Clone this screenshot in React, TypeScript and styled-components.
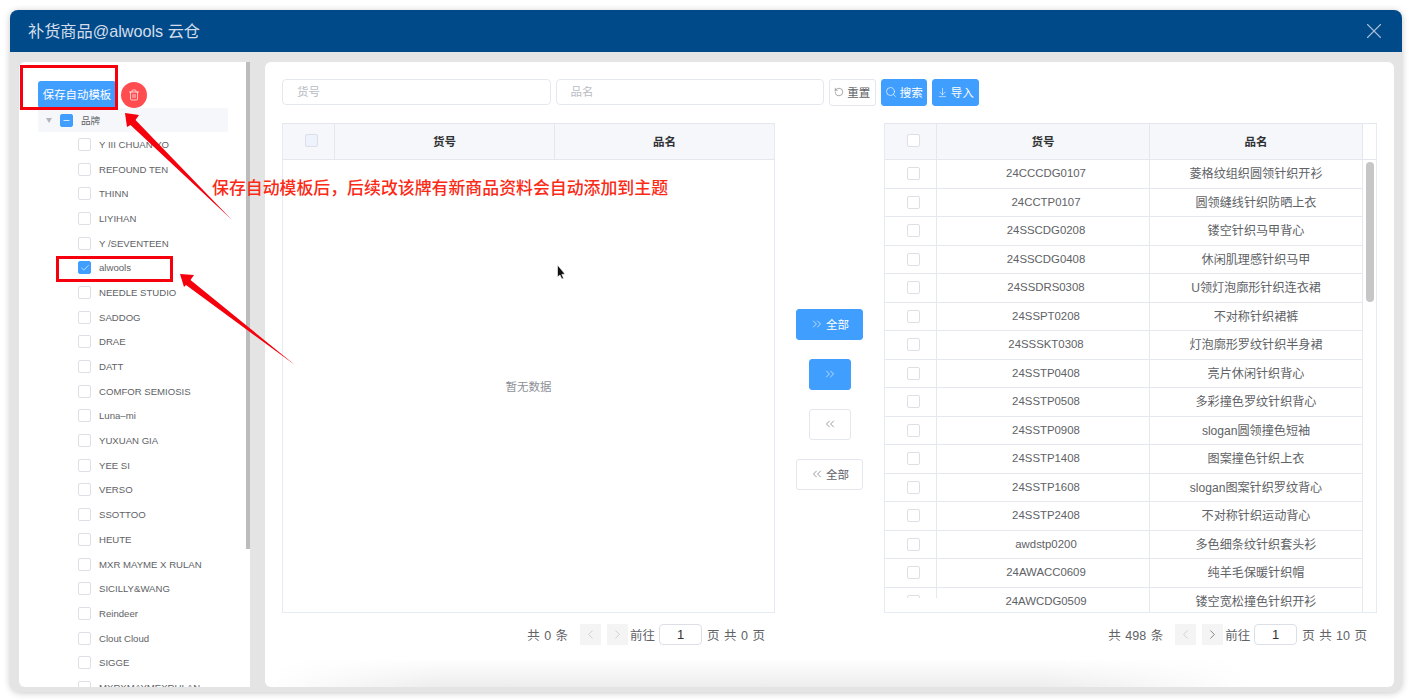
import React from "react";
import styled, { createGlobalStyle } from "styled-components";
import {
  ArrowDownToLine,
  Check,
  ChevronLeft,
  ChevronRight,
  ChevronsLeft,
  ChevronsRight,
  Minus,
  RotateCcw,
  Search,
  Trash2,
  X,
} from "lucide-react";

const GlobalStyle = createGlobalStyle`
  html, body {
    margin: 0;
    padding: 0;
    height: 700px;
    background: #fff;
    overflow: hidden;
    font-family: "Liberation Sans", "Noto Sans CJK SC", sans-serif;
  }
  * { box-sizing: border-box; }
`;

const Page = styled.div`
  position: relative;
  width: 1412px;
  height: 700px;
  padding: 10px 10px 8px;
`;

const Dialog = styled.div`
  display: flex;
  flex-direction: column;
  height: 682px;
  background: #e4e4e4;
  border-radius: 8px 8px 10px 10px;
  box-shadow: 0 1px 7px rgba(0, 0, 0, 0.22);
  overflow: hidden;
`;

const Header = styled.header`
  display: flex;
  align-items: center;
  justify-content: space-between;
  flex: none;
  height: 42px;
  padding: 0 15px 2px 18px;
  background: #004a8a;
  color: #d3deea;
  font-size: 16.2px;
`;

const CloseButton = styled.span`
  display: flex;
  margin-top: 2px;
  color: #a9bfd6;
`;

const Content = styled.div`
  display: flex;
  flex: 1;
  min-height: 0;
  padding: 10px 8px 5px 9px;
`;

const SidePanel = styled.aside`
  position: relative;
  flex: none;
  width: 231px;
  padding: 19px 0 0 19px;
  background: #fff;
  border-radius: 6px 0 0 6px;
  overflow: hidden;
`;

const SideScrollThumb = styled.div`
  position: absolute;
  top: 0;
  right: 0;
  width: 4px;
  height: 487px;
  background: #bcbcbc;
`;

const SideActions = styled.div`
  display: flex;
  align-items: center;
  gap: 5px;
  height: 27px;
`;

const SaveButton = styled.button`
  width: 78px;
  height: 27px;
  padding: 0 0 2px;
  border: 0;
  border-radius: 3px;
  background: #409eff;
  color: #fff;
  font: 11.4px "Noto Sans CJK SC", sans-serif;
`;

const DeleteButton = styled.button`
  display: flex;
  align-items: center;
  justify-content: center;
  width: 26px;
  height: 26px;
  padding: 0;
  border: 0;
  border-radius: 50%;
  background: #ff4d4f;
  color: #fff;
`;

const TreeRoot = styled.div`
  display: flex;
  align-items: center;
  width: 190px;
  height: 24px;
  background: #f5f7fa;
  color: #606266;
  font: 9.6px "Noto Sans CJK SC", sans-serif;
`;

const Caret = styled.span`
  width: 0;
  height: 0;
  margin: 0 8px 0 8px;
  border-style: solid;
  border-width: 5px 3.5px 0;
  border-color: #b4b6bb transparent transparent;
`;

const TreeLeaf = styled.div`
  display: flex;
  align-items: center;
  height: 24.7px;
  padding-left: 40px;
  color: #606266;
  font-size: 9.6px;
  white-space: nowrap;
`;

const Box = styled.span<{ $on?: boolean; $muted?: boolean }>`
  display: flex;
  align-items: center;
  justify-content: center;
  flex: none;
  width: 13px;
  height: 13px;
  border: 1px solid ${(p) => (p.$on ? "#409eff" : "#dcdfe6")};
  border-radius: 2px;
  background: ${(p) => (p.$on ? "#409eff" : p.$muted ? "#edf2fc" : "#fff")};
  color: #fff;
`;

const RootBox = styled(Box)`
  margin-right: 8px;
`;

const LeafBox = styled(Box)`
  margin-right: 8px;
`;

const MainPanel = styled.main`
  position: relative;
  flex: 1;
  margin-left: 15px;
  padding: 17px 17px 0;
  background: #fff;
  border-radius: 6px;
  overflow: hidden;

  &::after {
    content: "";
    position: absolute;
    left: 0;
    right: 140px;
    bottom: 0;
    height: 28px;
    background: linear-gradient(180deg, rgba(232, 232, 232, 0), rgba(232, 232, 232, 0.8));
    mask-image: linear-gradient(90deg, transparent, #000 18%, #000 78%, transparent);
    pointer-events: none;
  }
`;

const Toolbar = styled.div`
  display: flex;
  align-items: flex-start;
  gap: 5px;
  height: 27px;
`;

const SearchInput = styled.div`
  display: flex;
  align-items: center;
  width: 268.5px;
  height: 26px;
  padding: 0 0 2px 14px;
  border: 1px solid #e4e7ed;
  border-radius: 4px;
  color: #b9bcc3;
  font: 11.5px "Noto Sans CJK SC", sans-serif;
`;

const ToolButton = styled.button<{ $primary?: boolean }>`
  display: flex;
  align-items: center;
  justify-content: center;
  gap: 3px;
  width: 46.5px;
  height: 27px;
  padding: 0 0 1px;
  border: 1px solid ${(p) => (p.$primary ? "#409eff" : "#e4e7ed")};
  border-radius: 3px;
  background: ${(p) => (p.$primary ? "#409eff" : "#fff")};
  color: ${(p) => (p.$primary ? "#fff" : "#606266")};
  font: 11.5px "Noto Sans CJK SC", sans-serif;
`;

const Transfer = styled.div`
  display: flex;
  margin-top: 17px;
`;

const Column = styled.section`
  display: flex;
  flex-direction: column;
  flex: none;
  width: 493px;
`;

const Table = styled.div`
  display: flex;
  flex-direction: column;
  height: 490px;
  border: 1px solid #e6ebf3;
  border-top-color: #e4e7ed;
  overflow: hidden;
`;

const HeaderRow = styled.div<{ $scroll?: boolean }>`
  display: grid;
  grid-template-columns: ${(p) => (p.$scroll ? "52px 213px 213px 1fr" : "52px 220px 1fr")};
  flex: none;
  height: 36px;
  border-bottom: 1px solid #e4e7ed;
  background: #f5f7fa;
`;

const HeadCell = styled.div`
  display: flex;
  align-items: center;
  justify-content: center;
  padding-bottom: 2px;
  border-right: 1px solid #e4e7ed;
  color: #303133;
  font: 700 11.5px "Noto Sans CJK SC", sans-serif;

  &:last-child {
    border-right: 0;
  }
`;

const HeadCheck = styled(HeadCell)`
  padding-left: 5px;
`;

const ScrollGutter = styled.div`
  background: #fff;
`;

const EmptyBody = styled.div`
  display: flex;
  align-items: center;
  justify-content: center;
  flex: 1;
  color: #8d9097;
  font: 11.5px "Noto Sans CJK SC", sans-serif;
`;

const BodyWrap = styled.div`
  position: relative;
  flex: 1;
  min-height: 0;
  overflow: hidden;
`;

const Row = styled.div`
  display: grid;
  grid-template-columns: 52px 213px 213px;
  height: 28.5px;
  width: 478px;
  border-bottom: 1px solid #e6e8ef;
`;

const Cell = styled.div`
  display: flex;
  align-items: center;
  justify-content: center;
  padding-bottom: 2px;
  border-right: 1px solid #e6e8ef;
  color: #606266;
  font-size: 12.1px;
  white-space: nowrap;
`;

const CodeCell = styled(Cell)`
  padding: 0 0 1px 6px;
  font-size: 11.4px;
`;

const CheckCell = styled(Cell)<{ $cut?: boolean }>`
  align-items: ${(p) => (p.$cut ? "flex-start" : "center")};
  padding: ${(p) => (p.$cut ? "7px" : "0")} 0 0 5px;
  height: ${(p) => (p.$cut ? "10px" : "auto")};
  overflow: hidden;
  border-right: 0;
  box-shadow: inset -1px 0 0 #e6e8ef;
`;

const TableScroll = styled.div`
  position: absolute;
  top: 2px;
  right: 2px;
  width: 8px;
  height: 140px;
  border-radius: 4px;
  background: #c6c6c6;
`;

const Pager = styled.div`
  display: flex;
  align-items: center;
  justify-content: flex-end;
  height: 21px;
  margin-top: 11px;
  padding-right: 10px;
  color: #606266;
  font-size: 12.5px;
  white-space: nowrap;
  word-spacing: 1px;
`;

const PagerTotal = styled.span`
  margin-right: 12px;
`;

const PageArrow = styled.span<{ $off?: boolean }>`
  display: flex;
  align-items: center;
  justify-content: center;
  width: 21px;
  height: 21px;
  margin-right: 6px;
  background: #f4f4f5;
  color: ${(p) => (p.$off ? "#c0c4cc" : "#606266")};
`;

const PagerLabel = styled.span`
  margin-left: -4px;
`;

const PageInput = styled.span`
  display: flex;
  align-items: center;
  justify-content: center;
  width: 43px;
  height: 21px;
  margin: 0 5px 0 4px;
  border: 1px solid #dcdfe6;
  border-radius: 4px;
  color: #303133;
  font-size: 13px;
`;

const Shuttle = styled.div`
  display: flex;
  flex: 1;
  flex-direction: column;
  align-items: center;
  gap: 19px;
  padding-top: 186px;
`;

const ShuttleButton = styled.button<{ $primary?: boolean; $wide?: boolean }>`
  display: flex;
  align-items: center;
  justify-content: center;
  gap: 2px;
  width: ${(p) => (p.$wide ? "67px" : "42px")};
  height: 31px;
  padding: 0 0 1px;
  border: 1px solid ${(p) => (p.$primary ? "#409eff" : "#e4e7ed")};
  border-radius: 3px;
  background: ${(p) => (p.$primary ? "#409eff" : "#fff")};
  color: ${(p) => (p.$primary ? "#fff" : "#606266")};
  font: 11.5px "Noto Sans CJK SC", sans-serif;
`;

const Overlay = styled.svg`
  position: absolute;
  inset: 0;
  pointer-events: none;
`;

const Frame = styled.div<{ $x: number; $y: number; $w: number; $h: number }>`
  position: absolute;
  left: ${(p) => p.$x}px;
  top: ${(p) => p.$y}px;
  width: ${(p) => p.$w}px;
  height: ${(p) => p.$h}px;
  border: 3px solid #f5000c;
  pointer-events: none;
`;

const Note = styled.div`
  position: absolute;
  left: 212px;
  top: 175px;
  color: #fb2a17;
  font: 500 16.9px/24px "Noto Sans CJK SC", sans-serif;
  white-space: nowrap;
`;

const brands = [
  "Y III CHUAN YO",
  "REFOUND TEN",
  "THINN",
  "LIYIHAN",
  "Y /SEVENTEEN",
  "alwools",
  "NEEDLE STUDIO",
  "SADDOG",
  "DRAE",
  "DATT",
  "COMFOR SEMIOSIS",
  "Luna–mi",
  "YUXUAN GIA",
  "YEE SI",
  "VERSO",
  "SSOTTOO",
  "HEUTE",
  "MXR MAYME X RULAN",
  "SICILLY&WANG",
  "Reindeer",
  "Clout Cloud",
  "SIGGE",
  "MXRXMAYMEXRULAN",
];

const goods = [
  ["24CCCDG0107", "菱格纹组织圆领针织开衫"],
  ["24CCTP0107", "圆领缝线针织防晒上衣"],
  ["24SSCDG0208", "镂空针织马甲背心"],
  ["24SSCDG0408", "休闲肌理感针织马甲"],
  ["24SSDRS0308", "U领灯泡廓形针织连衣裙"],
  ["24SSPT0208", "不对称针织裙裤"],
  ["24SSSKT0308", "灯泡廓形罗纹针织半身裙"],
  ["24SSTP0408", "亮片休闲针织背心"],
  ["24SSTP0508", "多彩撞色罗纹针织背心"],
  ["24SSTP0908", "slogan圆领撞色短袖"],
  ["24SSTP1408", "图案撞色针织上衣"],
  ["24SSTP1608", "slogan图案针织罗纹背心"],
  ["24SSTP2408", "不对称针织运动背心"],
  ["awdstp0200", "多色细条纹针织套头衫"],
  ["24AWACC0609", "纯羊毛保暖针织帽"],
  ["24AWCDG0509", "镂空宽松撞色针织开衫"],
];

const PagerBar: React.FC<{ total: string; pages: string; canNext?: boolean }> = ({
  total,
  pages,
  canNext,
}) => (
  <Pager>
    <PagerTotal>共 {total} 条</PagerTotal>
    <PageArrow $off>
      <ChevronLeft size={15} strokeWidth={1.2} />
    </PageArrow>
    <PageArrow $off={!canNext}>
      <ChevronRight size={15} strokeWidth={1.2} />
    </PageArrow>
    <PagerLabel>前往</PagerLabel>
    <PageInput>1</PageInput>
    <span>页 共 {pages} 页</span>
  </Pager>
);

const App: React.FC = () => {
  return (
    <Page>
      <GlobalStyle />
      <Dialog>
        <Header>
          <span>补货商品@alwools 云仓</span>
          <CloseButton>
            <X size={26} strokeWidth={1} />
          </CloseButton>
        </Header>
        <Content>
          <SidePanel>
            <SideScrollThumb />
            <SideActions>
              <SaveButton>保存自动模板</SaveButton>
              <DeleteButton aria-label="删除">
                <Trash2 size={12} strokeWidth={1.4} />
              </DeleteButton>
            </SideActions>
            <TreeRoot>
              <Caret />
              <RootBox $on>
                <Minus size={9} strokeWidth={2} />
              </RootBox>
              品牌
            </TreeRoot>
            {brands.map((name) => (
              <TreeLeaf key={name}>
                <LeafBox $on={name === "alwools"}>
                  {name === "alwools" && <Check size={10} strokeWidth={1.6} />}
                </LeafBox>
                {name}
              </TreeLeaf>
            ))}
          </SidePanel>
          <MainPanel>
            <Toolbar>
              <SearchInput>货号</SearchInput>
              <SearchInput>品名</SearchInput>
              <ToolButton>
                <RotateCcw size={10} strokeWidth={1.3} />
                重置
              </ToolButton>
              <ToolButton $primary>
                <Search size={12} strokeWidth={1.3} />
                搜索
              </ToolButton>
              <ToolButton $primary>
                <ArrowDownToLine size={11} strokeWidth={1.3} />
                导入
              </ToolButton>
            </Toolbar>
            <Transfer>
              <Column>
                <Table>
                  <HeaderRow>
                    <HeadCheck>
                      <Box $muted />
                    </HeadCheck>
                    <HeadCell>货号</HeadCell>
                    <HeadCell>品名</HeadCell>
                  </HeaderRow>
                  <EmptyBody>暂无数据</EmptyBody>
                </Table>
                <PagerBar total="0" pages="0" />
              </Column>
              <Shuttle>
                <ShuttleButton $primary $wide>
                  <ChevronsRight size={14} strokeWidth={1.1} />
                  全部
                </ShuttleButton>
                <ShuttleButton $primary>
                  <ChevronsRight size={14} strokeWidth={1.1} />
                </ShuttleButton>
                <ShuttleButton>
                  <ChevronsLeft size={14} strokeWidth={1.1} />
                </ShuttleButton>
                <ShuttleButton $wide>
                  <ChevronsLeft size={14} strokeWidth={1.1} />
                  全部
                </ShuttleButton>
              </Shuttle>
              <Column>
                <Table>
                  <HeaderRow $scroll>
                    <HeadCheck>
                      <Box />
                    </HeadCheck>
                    <HeadCell>货号</HeadCell>
                    <HeadCell>品名</HeadCell>
                    <ScrollGutter />
                  </HeaderRow>
                  <BodyWrap>
                    <TableScroll />
                    {goods.map(([code, name], i) => (
                      <Row key={code}>
                        <CheckCell $cut={i === goods.length - 1}>
                          <Box />
                        </CheckCell>
                        <CodeCell>{code}</CodeCell>
                        <Cell>{name}</Cell>
                      </Row>
                    ))}
                  </BodyWrap>
                </Table>
                <PagerBar total="498" pages="10" canNext />
              </Column>
            </Transfer>
          </MainPanel>
        </Content>
      </Dialog>

      <Frame $x={20} $y={65} $w={98} $h={45} />
      <Frame $x={56} $y={256} $w={117} $h={26} />
      <Note>保存自动模板后，后续改该牌有新商品资料会自动添加到主题</Note>
      <Overlay width="1412" height="700" viewBox="0 0 1412 700">
        <polygon points="125,113 139,115 135.5,120 232,220 130.5,125 127,127" fill="#f5000c" />
        <polygon points="180,274 194,275 190.5,280 295,365 186,285 184,287" fill="#f5000c" />
        <path
          d="M557.5 265 L557.5 277 L560 275 L561.8 279 L563.6 278.2 L561.8 274.4 L565 274 Z"
          fill="#111"
          stroke="#fff"
          strokeWidth="0.6"
        />
      </Overlay>
    </Page>
  );
};

export default App;
